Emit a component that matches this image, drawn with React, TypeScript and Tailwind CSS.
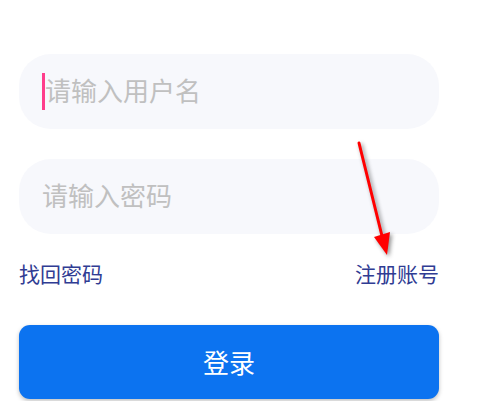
import React from "react";

const font = { fontFamily: '"Noto Sans CJK SC", "Noto Sans", sans-serif' };

function Field({ placeholder, caret }: { placeholder: string; caret?: boolean }) {
  return (
    <div className="h-[75px] rounded-[32px] bg-[#f7f8fc] flex items-center pl-[23px]">
      {caret && <span className="w-[3px] h-[37px] bg-[#ff3d8b]" />}
      <span className="text-[26px] leading-none text-[#c0c0c0] mb-[4px]">{placeholder}</span>
    </div>
  );
}

export default function App() {
  return (
    <div className="relative w-[486px] h-[401px] bg-white overflow-hidden" style={font}>
      <div className="px-[19px] pt-[54px] w-[458px]">
        <Field placeholder="请输入用户名" caret />
        <div className="h-[30px]" />
        <Field placeholder="请输入密码" />
        <div className="flex justify-between items-center h-[28px] mt-[25px] text-[21px] leading-none text-[#303c93]">
          <span>找回密码</span>
          <span>注册账号</span>
        </div>
        <button className="mt-[38px] w-full h-[74px] rounded-[11px] bg-[#0c73f0] text-white text-[26px] leading-none shadow-[0_2px_4px_rgba(0,0,0,0.25)]">
          登录
        </button>
      </div>
      <svg
        className="absolute left-0 top-0 pointer-events-none"
        width="486"
        height="401"
        style={{ filter: "drop-shadow(2px 2px 2px rgba(0,0,0,0.45))" }}
      >
        <line x1="359" y1="143" x2="383" y2="240" stroke="#ff0000" strokeWidth="3" strokeLinecap="round" />
        <polygon points="374,237 390,232 387,255" fill="#ff0000" />
      </svg>
    </div>
  );
}
